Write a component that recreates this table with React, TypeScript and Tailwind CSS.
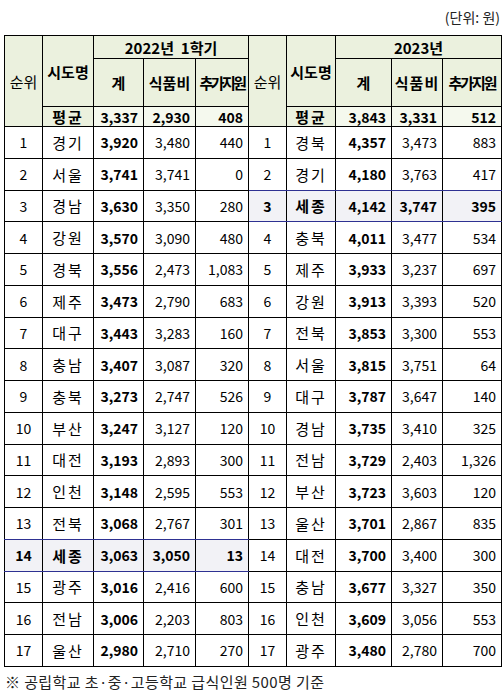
import React from "react";

type Row = [string, string, string, string, string];

const left: Row[] = [
  ["1", "경기", "3,920", "3,480", "440"],
  ["2", "서울", "3,741", "3,741", "0"],
  ["3", "경남", "3,630", "3,350", "280"],
  ["4", "강원", "3,570", "3,090", "480"],
  ["5", "경북", "3,556", "2,473", "1,083"],
  ["6", "제주", "3,473", "2,790", "683"],
  ["7", "대구", "3,443", "3,283", "160"],
  ["8", "충남", "3,407", "3,087", "320"],
  ["9", "충북", "3,273", "2,747", "526"],
  ["10", "부산", "3,247", "3,127", "120"],
  ["11", "대전", "3,193", "2,893", "300"],
  ["12", "인천", "3,148", "2,595", "553"],
  ["13", "전북", "3,068", "2,767", "301"],
  ["14", "세종", "3,063", "3,050", "13"],
  ["15", "광주", "3,016", "2,416", "600"],
  ["16", "전남", "3,006", "2,203", "803"],
  ["17", "울산", "2,980", "2,710", "270"],
];

const right: Row[] = [
  ["1", "경북", "4,357", "3,473", "883"],
  ["2", "경기", "4,180", "3,763", "417"],
  ["3", "세종", "4,142", "3,747", "395"],
  ["4", "충북", "4,011", "3,477", "534"],
  ["5", "제주", "3,933", "3,237", "697"],
  ["6", "강원", "3,913", "3,393", "520"],
  ["7", "전북", "3,853", "3,300", "553"],
  ["8", "서울", "3,815", "3,751", "64"],
  ["9", "대구", "3,787", "3,647", "140"],
  ["10", "경남", "3,735", "3,410", "325"],
  ["11", "전남", "3,729", "2,403", "1,326"],
  ["12", "부산", "3,723", "3,603", "120"],
  ["13", "울산", "3,701", "2,867", "835"],
  ["14", "대전", "3,700", "3,400", "300"],
  ["15", "충남", "3,677", "3,327", "350"],
  ["16", "인천", "3,609", "3,056", "553"],
  ["17", "광주", "3,480", "2,780", "700"],
];

const LEFT_HL = 13;
const RIGHT_HL = 2;

function Half({ row, hl, navyBottom }: { row: Row; hl: boolean; navyBottom: boolean }) {
  const bg = hl ? "bg-[#f2f2f6]" : "";
  const bb = navyBottom || hl ? "border-b-[#2e3192]" : "";
  const base = `border border-black ${bg} ${bb}`;
  return (
    <>
      <td className={`${base} text-center ${hl ? "font-bold" : ""}`}>{row[0]}</td>
      <td className={`${base} text-center text-[15px] tracking-[2px] ${hl ? "font-bold" : ""}`}>{row[1]}</td>
      <td className={`${base} text-right pr-[5px] font-bold`}>{row[2]}</td>
      <td className={`${base} text-right pr-[5px] ${hl ? "font-bold" : ""}`}>{row[3]}</td>
      <td className={`${base} text-right pr-[5px] ${hl ? "font-bold" : ""}`}>{row[4]}</td>
    </>
  );
}

export default function App() {
  const font = { fontFamily: '"Noto Sans CJK KR", "Noto Sans", sans-serif' };
  return (
    <div className="w-[504px] h-[694px] bg-white text-black overflow-hidden" style={font}>
      <div className="h-[35px] flex items-start justify-end pr-[4px] pt-[8px] text-[14px] leading-[18px] text-[#222]">
        (단위: 원)
      </div>
      <table className="ml-[4px] w-[497px] table-fixed border-collapse text-[14px] leading-none">
        <colgroup>
          <col className="w-[38px]" />
          <col className="w-[51px]" />
          <col className="w-[50px]" />
          <col className="w-[52px]" />
          <col className="w-[53px]" />
          <col className="w-[38px]" />
          <col className="w-[49px]" />
          <col className="w-[56px]" />
          <col className="w-[51px]" />
          <col className="w-[59px]" />
        </colgroup>
        <thead>
          <tr className="h-[23px]">
            <td rowSpan={3} className="border border-black bg-[#ebf1de] text-center text-[15px]">순위</td>
            <td rowSpan={2} className="border border-black bg-[#ebf1de] text-center font-bold text-[15px]">시도명</td>
            <td colSpan={3} className="border border-black bg-[#ebf1de] text-center font-bold text-[15px]">2022년&nbsp;&nbsp;1학기</td>
            <td rowSpan={3} className="border border-black bg-[#ebf1de] text-center text-[15px]">순위</td>
            <td rowSpan={2} className="border border-black bg-[#ebf1de] text-center font-bold text-[15px]">시도명</td>
            <td colSpan={3} className="border border-black bg-[#ebf1de] text-center font-bold text-[15px]">2023년</td>
          </tr>
          <tr className="h-[48px]">
            <td className="border border-black bg-[#ebf1de] text-center font-bold text-[15px]">계</td>
            <td className="border border-black bg-[#ebf1de] text-center font-bold text-[15px]">식품비</td>
            <td className="border border-black bg-[#ebf1de] text-center font-bold text-[15px] tracking-[-2.5px]">추가지원</td>
            <td className="border border-black bg-[#ebf1de] text-center font-bold text-[15px]">계</td>
            <td className="border border-black bg-[#ebf1de] text-center font-bold text-[15px] tracking-[1px]">식품비</td>
            <td className="border border-black bg-[#ebf1de] text-center font-bold text-[15px] tracking-[-2px]">추가지원</td>
          </tr>
          <tr className="h-[20px] font-bold">
            <td className="border border-black bg-[#ebf1de] text-center text-[15px] tracking-[2px]">평균</td>
            <td className="border border-black bg-[#f5f9ee] text-right pr-[5px]">3,337</td>
            <td className="border border-black bg-[#f5f9ee] text-right pr-[5px]">2,930</td>
            <td className="border border-black bg-[#f5f9ee] text-right pr-[5px]">408</td>
            <td className="border border-black bg-[#ebf1de] text-center text-[15px] tracking-[2px]">평균</td>
            <td className="border border-black bg-[#f5f9ee] text-right pr-[5px]">3,843</td>
            <td className="border border-black bg-[#f5f9ee] text-right pr-[5px]">3,331</td>
            <td className="border border-black bg-[#f5f9ee] text-right pr-[5px]">512</td>
          </tr>
        </thead>
        <tbody>
          {left.map((l, i) => (
            <tr key={i} className="h-[31.76px]">
              <Half row={l} hl={i === LEFT_HL} navyBottom={i === LEFT_HL - 1} />
              <Half row={right[i]} hl={i === RIGHT_HL} navyBottom={i === RIGHT_HL - 1} />
            </tr>
          ))}
        </tbody>
      </table>
      <div className="pl-[5px] pt-[6px] text-[15px] leading-[18px] tracking-[0.4px] text-[#222]">
        ※ 공립학교 초·중·고등학교 급식인원 500명 기준
      </div>
    </div>
  );
}
